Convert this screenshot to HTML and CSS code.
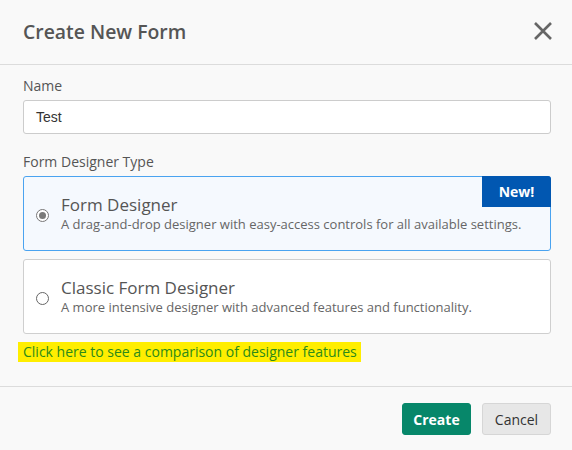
FILE: index.html
```html
<!DOCTYPE html>
<html>
<head>
<meta charset="utf-8">
<link rel="stylesheet" href="styles.css">
</head>
<body>
<div class="dialog">
  <div class="header">
    <h1 class="title">Create New Form</h1>
    <button class="close" aria-label="Close">
      <svg width="20" height="20" viewBox="0 0 20 20"><path d="M2 2 L18 18 M18 2 L2 18" stroke="#666" stroke-width="2.6" fill="none"/></svg>
    </button>
  </div>
  <div class="body">
    <label class="label">Name</label>
    <div class="input">Test</div>
    <label class="label type-label">Form Designer Type</label>
    <div class="card selected">
      <span class="radio checked"></span>
      <div class="card-text">
        <div class="card-title">Form Designer</div>
        <div class="card-desc">A drag-and-drop designer with easy-access controls for all available settings.</div>
      </div>
      <span class="badge">New!</span>
    </div>
    <div class="card">
      <span class="radio"></span>
      <div class="card-text">
        <div class="card-title">Classic Form Designer</div>
        <div class="card-desc">A more intensive designer with advanced features and functionality.</div>
      </div>
    </div>
    <div class="link-row"><a class="link">Click here to see a comparison of designer features</a></div>
  </div>
  <div class="footer">
    <button class="btn btn-create">Create</button>
    <button class="btn btn-cancel">Cancel</button>
  </div>
</div>
</body>
</html>
```

FILE: styles.css
```css
html, body {
  margin: 0;
  padding: 0;
  background: #f9f9f9;
  font-family: "Open Sans", "Noto Sans", sans-serif;
  color: #555;
}
.dialog {
  width: 572px;
  height: 450px;
  display: flex;
  flex-direction: column;
}
.header {
  height: 65px;
  border-bottom: 1px solid #dcdcdc;
  display: flex;
  align-items: center;
  justify-content: space-between;
  padding: 0 19px 0 23px;
  box-sizing: border-box;
  flex: none;
}
.title {
  margin: 0;
  font-size: 19.4px;
  font-weight: 600;
  color: #555;
  line-height: 28px;
}
.close {
  border: none;
  background: none;
  padding: 0;
  width: 20px;
  height: 20px;
  display: block;
  margin-top: -3px;
}
.close svg { display: block; }
.body {
  padding: 11px 21px 0 23px;
  display: flex;
  flex-direction: column;
  flex: none;
  height: 322px;
  box-sizing: border-box;
  border-bottom: 1px solid #dcdcdc;
}
.label {
  font-size: 14px;
  line-height: 20px;
  color: #555;
  display: block;
}
.input {
  margin-top: 4px;
  height: 34px;
  box-sizing: border-box;
  border: 1px solid #cccccc;
  border-radius: 3px;
  background: #fff;
  font-family: "Liberation Sans", Arial, sans-serif;
  font-size: 14px;
  color: #333;
  padding: 0 12px;
  display: flex;
  align-items: center;
}
.type-label {
  margin-top: 18px;
}
.card {
  position: relative;
  margin-top: 4px;
  height: 75px;
  box-sizing: border-box;
  border: 1px solid #cfcfcf;
  border-radius: 3px;
  background: #fff;
  display: flex;
  align-items: center;
  padding: 0 12px 0 12px;
  gap: 12px;
}
.card + .card { margin-top: 8px; }
.card.selected {
  border-color: #4aa3f0;
  background: #f5f9fe;
}
.radio {
  width: 13px;
  height: 13px;
  box-sizing: border-box;
  border: 1px solid #666;
  border-radius: 50%;
  background: #fff;
  flex: none;
  margin-top: 3px;
  position: relative;
}
.radio.checked {
  border-color: #777;
}
.radio.checked::after {
  content: "";
  position: absolute;
  left: 2px;
  top: 2px;
  width: 7px;
  height: 7px;
  border-radius: 50%;
  background: #7a7a7a;
}
.card-text {
  display: flex;
  flex-direction: column;
  padding-top: 0;
}
.card-title {
  font-size: 17px;
  font-weight: 500;
  line-height: 21px;
  color: #555;
}
.card-desc {
  font-size: 13px;
  line-height: 18px;
  color: #666;
}
.badge {
  position: absolute;
  top: -1px;
  right: -1px;
  width: 69px;
  height: 31px;
  background: #0157b1;
  color: #fff;
  font-weight: 700;
  font-size: 14px;
  display: flex;
  align-items: center;
  justify-content: center;
  border-top-right-radius: 3px;
}
.link-row {
  margin-top: 7px;
  line-height: 20px;
}
.link {
  font-size: 14px;
  color: #2c8a1a;
  background: #ffee00;
  padding: 0 4px 0 5px;
  margin-left: -5px;
  display: inline-block;
  line-height: 20px;
}
.footer {
  display: flex;
  justify-content: flex-end;
  align-items: flex-start;
  gap: 11px;
  padding: 16px 21px 0 23px;
}
.btn {
  height: 32px;
  width: 69px;
  border-radius: 3px;
  font-family: "Open Sans", "Noto Sans", sans-serif;
  font-size: 14px;
  padding: 0;
  box-sizing: border-box;
}
.btn-create {
  background: #07876a;
  color: #fff;
  font-weight: 700;
  border: 1px solid #07876a;
}
.btn-cancel {
  background: #e7e7e7;
  color: #333;
  border: 1px solid #d6d6d6;
}
```
